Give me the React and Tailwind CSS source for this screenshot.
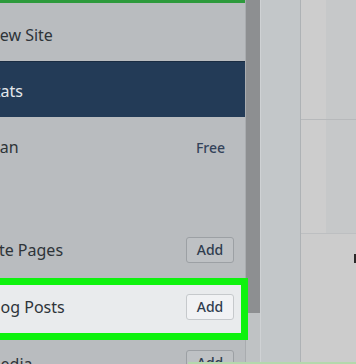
import React from 'react';

// Sidebar menu rows (labels start off-screen to the left, like the crop)
const topRows = [
  { label: 'View Site', h: 'h-[58px]', nudge: 'mt-[5px]' },
  { label: 'Stats', h: 'h-[56px]', nudge: 'mt-[3px]', active: true },
  { label: 'Plan', h: 'h-[60px]', nudge: '', badge: 'Free' },
];

function AddButton({ light }) {
  return (
    <button
      className={`h-[26px] w-[48px] rounded-[3px] border text-[14px] font-medium leading-none text-[#2f3d4f] ${
        light ? 'bg-[#f1f2f4] border-[#c6c9cc]' : 'bg-[#bec1c4] border-[#9ca0a4]'
      }`}
    >
      Add
    </button>
  );
}

export default function App() {
  return (
    <div
      className="relative flex h-[364px] w-[356px] overflow-hidden bg-[#c9cacb]"
      style={{ fontFamily: '"Noto Sans", "Open Sans", sans-serif' }}
    >
      {/* Sidebar panel */}
      <div className="flex w-[245px] shrink-0 flex-col bg-[#b9bcbf] text-[16px] text-[#2e3439]">
        <div className="h-[3px] shrink-0 bg-[#2d9a3c]" />
        {topRows.map((row) => (
          <div
            key={row.label}
            className={`flex shrink-0 items-center justify-between pr-[20px] ${row.h} ${
              row.active ? 'bg-[#233b57] text-[#e4e8ec] border-t border-[#1a2c42]' : ''
            }`}
          >
            <span className={`ml-[-14px] whitespace-nowrap ${row.nudge}`}>{row.label}</span>
            {row.badge && (
              <span className="text-[14px] font-medium text-[#34435a]">{row.badge}</span>
            )}
          </div>
        ))}
        <div className="h-[45px] shrink-0" />
        <div className="flex h-[56px] shrink-0 items-center justify-between pr-[11px]">
          <span className="ml-[-14px] whitespace-nowrap">Site Pages</span>
          <AddButton />
        </div>
        <div className="relative flex h-[57px] shrink-0 items-center justify-between bg-[#e9ebed] pr-[11px]">
          <span className="ml-[-14px] whitespace-nowrap">Blog Posts</span>
          <AddButton light />
          {/* highlight frame */}
          <div className="pointer-events-none absolute left-[-10px] right-[-3px] top-0 h-[62px] border-[7px] border-[#0ef20e]" />
        </div>
        <div className="flex h-[56px] shrink-0 items-start justify-between pr-[11px] pt-[15px]">
          <span className="ml-[-14px] mt-[2px] whitespace-nowrap">Media</span>
          <AddButton />
        </div>
      </div>

      {/* Scrollbar */}
      <div className="flex w-[15px] shrink-0 flex-col border-l border-[#a9acaf] bg-[#bfc2c4]">
        <div className="h-[313px] shrink-0 bg-[#8d8f91]" />
      </div>

      {/* Middle column */}
      <div className="w-[41px] shrink-0 border-l border-[#cfd2d4] border-r border-r-[#aeb2b5] bg-[#c3c7c9]" />

      {/* Right content */}
      <div className="flex flex-1 flex-col">
        <div className="flex h-[120px] shrink-0 border-b border-[#b7b9bb]">
          <div className="w-[25px] bg-[#cdcdcd]" />
          <div className="flex-1 bg-[#c6c8c9]" />
        </div>
        <div className="flex h-[114px] shrink-0 border-b border-[#bdbfc1]">
          <div className="w-[25px] bg-[#cdcdcd]" />
          <div className="flex-1 bg-[#c6c8c9]" />
        </div>
        <div className="flex flex-1 items-start justify-end bg-[#cccccc] pt-[20px]">
          <div className="h-[9px] w-[2px] bg-[#2a2a2a]" />
        </div>
      </div>

      {/* faint green line at the bottom edge */}
      <div className="pointer-events-none absolute bottom-0 left-[188px] right-0 h-[2px] bg-[#b4d8ac]" />
    </div>
  );
}
